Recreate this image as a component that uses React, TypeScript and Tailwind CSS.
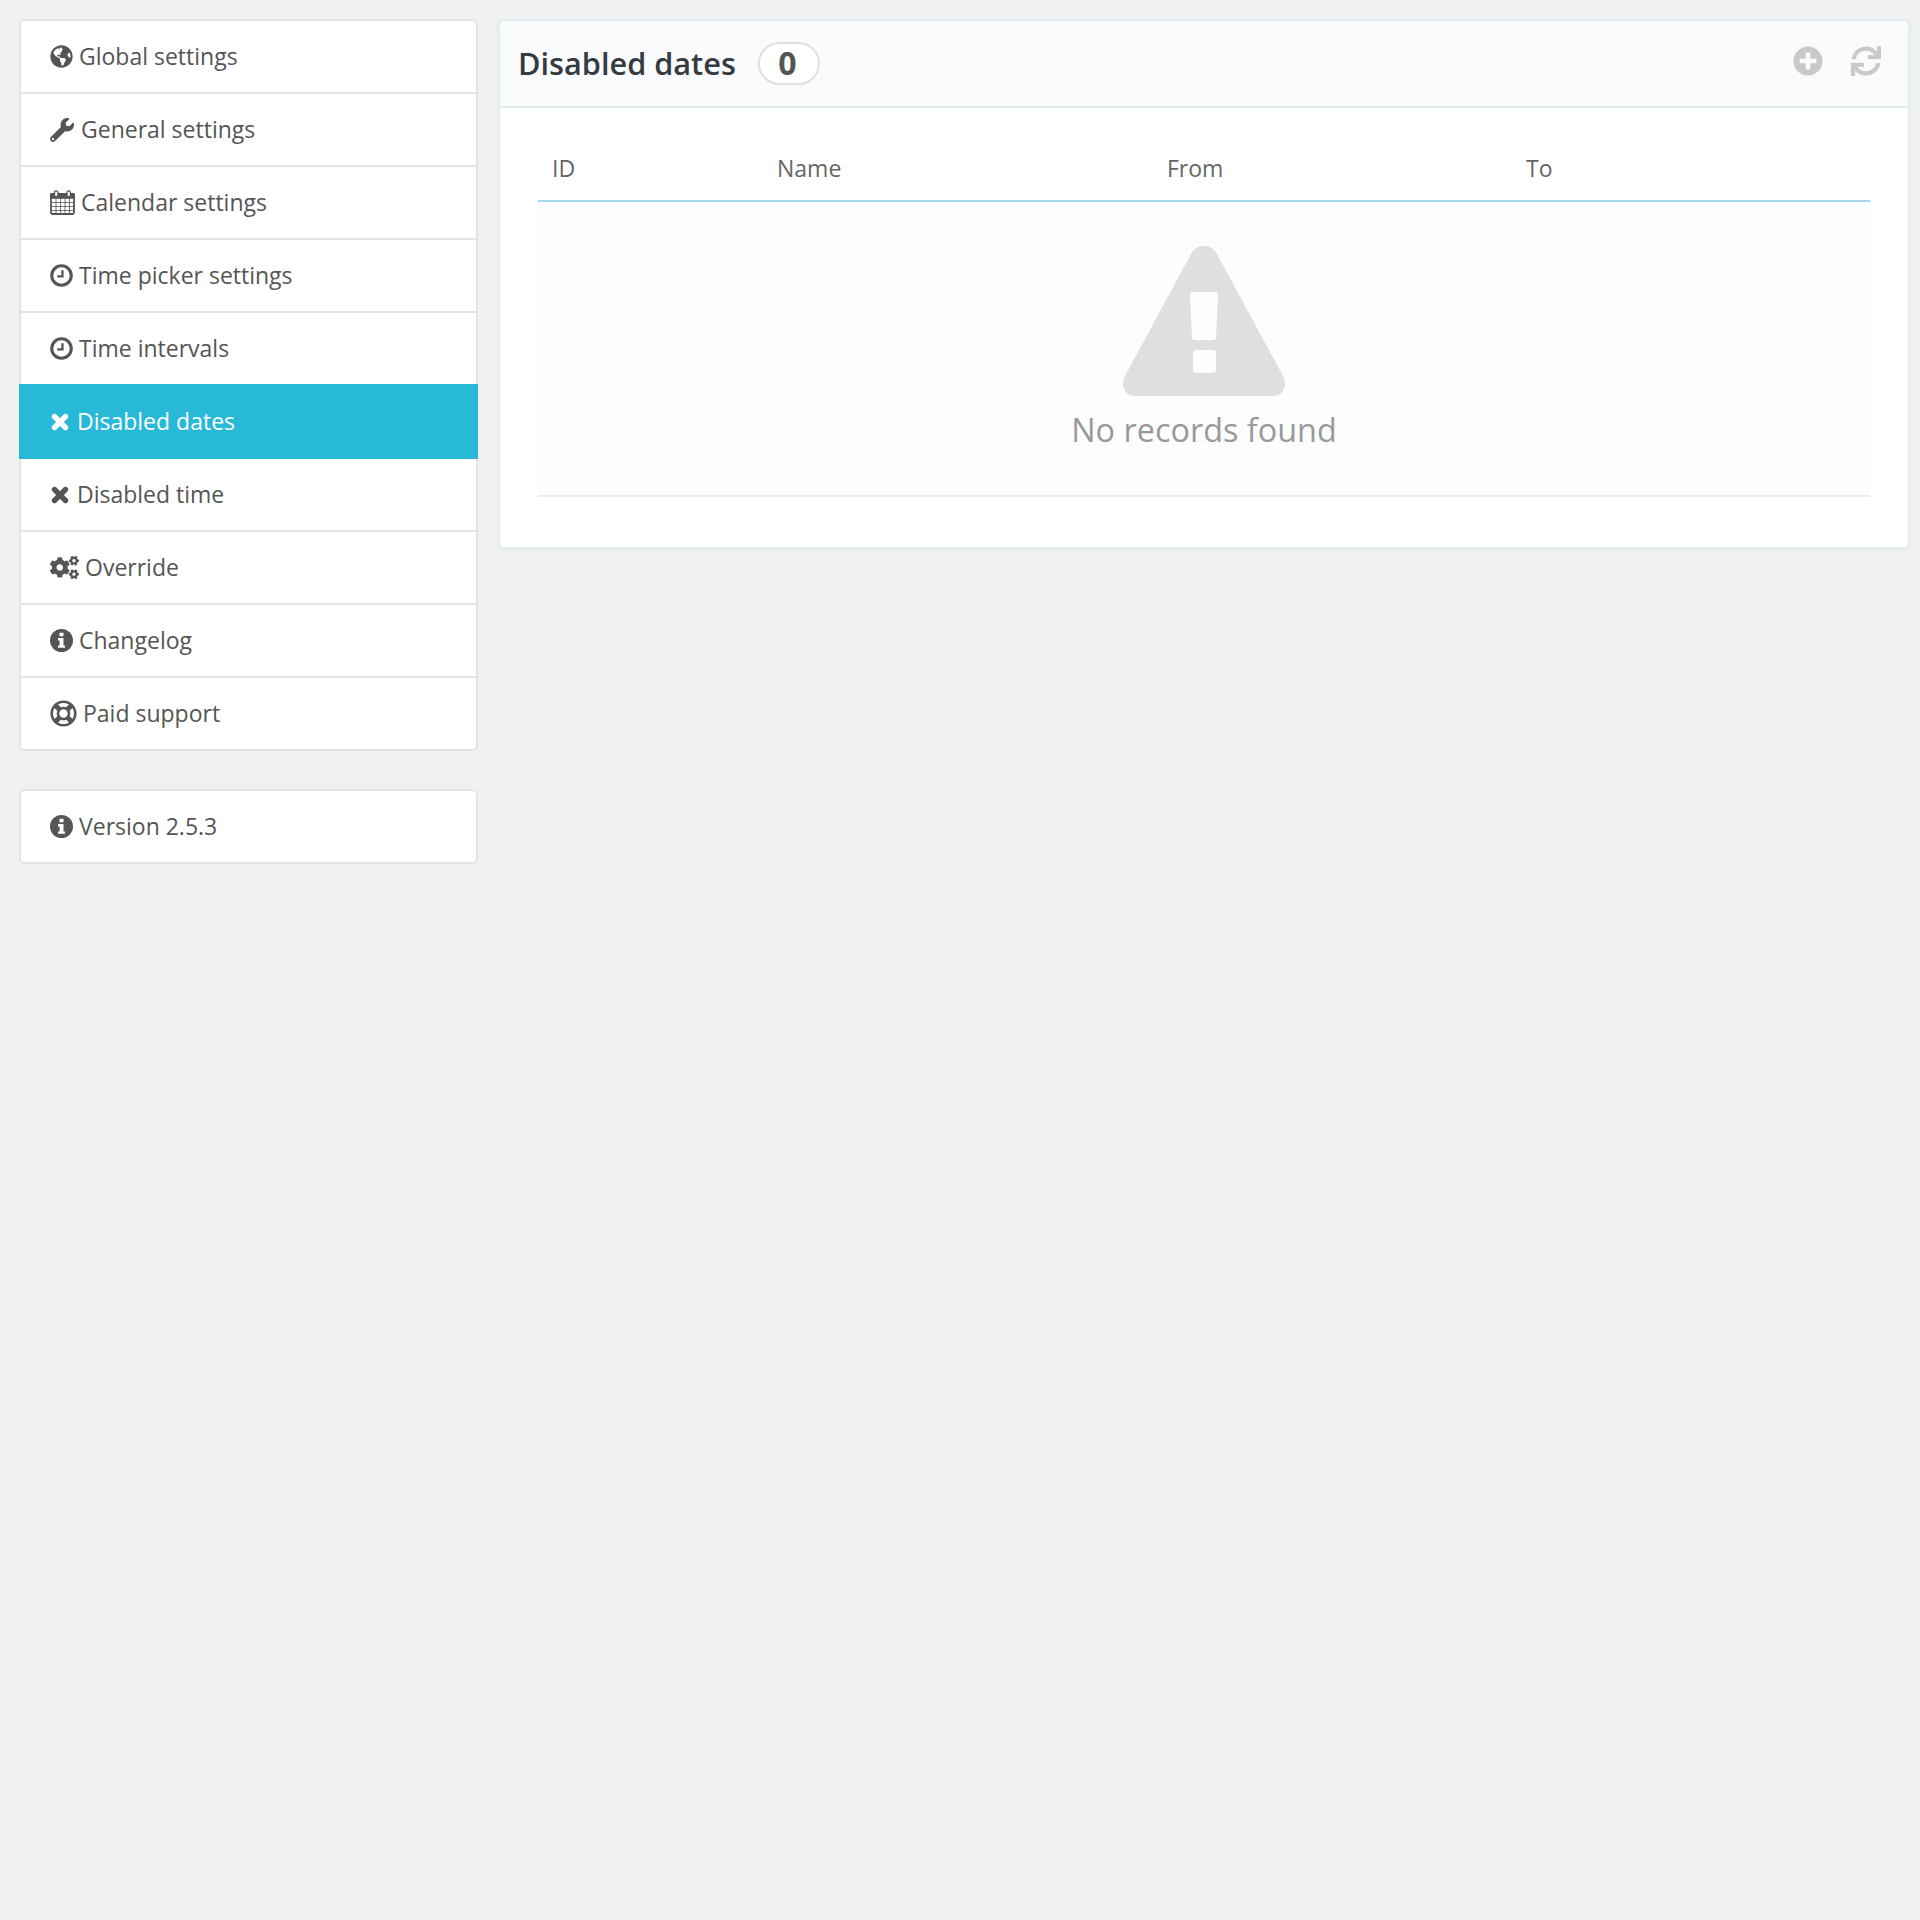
import type { ReactNode } from 'react';
import { FaCogs, FaGlobeAmericas, FaPlusCircle, FaRegLifeRing, FaSync, FaWrench } from 'react-icons/fa';

function ClockIcon() {
  return (
    <svg viewBox="0 0 24 24" className="w-[23px] h-[23px]" fill="none" stroke="currentColor">
      <circle cx="12" cy="12" r="10.2" strokeWidth="3.2" />
      <path d="M13 6.5V13H7.5" strokeWidth="2.4" />
    </svg>
  );
}

function CalendarIcon() {
  return (
    <svg viewBox="0 0 25 25" className="w-[25px] h-[25px]" fill="none" stroke="currentColor">
      <rect x="1" y="4" width="23" height="20" rx="1.5" strokeWidth="1.8" />
      <rect x="1" y="4" width="23" height="4" fill="currentColor" strokeWidth="1.6" />
      <path d="M1 12.5h23M1 16.5h23M1 20.5h23M6 8v16M10.5 8v16M15 8v16M19.5 8v16" strokeWidth="0.8" />
      <rect x="4.5" y="0.8" width="3.4" height="6" rx="1.7" fill="#fff" strokeWidth="1.3" />
      <rect x="17" y="0.8" width="3.4" height="6" rx="1.7" fill="#fff" strokeWidth="1.3" />
    </svg>
  );
}

function RemoveIcon() {
  return (
    <svg viewBox="0 0 20 20" className="w-[20px] h-[20px]" fill="none" stroke="currentColor">
      <path d="M4.5 4.5l11 11M15.5 4.5l-11 11" strokeWidth="5.4" strokeLinecap="round" />
    </svg>
  );
}

function InfoIcon() {
  return (
    <svg viewBox="0 0 23 23" className="w-[23px] h-[23px]">
      <path
        fillRule="evenodd"
        fill="currentColor"
        d="M11.5 0a11.5 11.5 0 1 1 0 23a11.5 11.5 0 0 1 0-23zM9.5 3.8v3.4h4V3.8h-4zM8 9v2.4h1.6v5H8v2.4h7v-2.4h-1.5V9H8z"
      />
    </svg>
  );
}

const menu: { label: string; icon: ReactNode; gap: string }[] = [
  { label: 'Global settings', icon: <FaGlobeAmericas size={23} />, gap: 'gap-[6px]' },
  { label: 'General settings', icon: <FaWrench size={24} />, gap: 'gap-[7px]' },
  { label: 'Calendar settings', icon: <CalendarIcon />, gap: 'gap-[6px]' },
  { label: 'Time picker settings', icon: <ClockIcon />, gap: 'gap-[6px]' },
  { label: 'Time intervals', icon: <ClockIcon />, gap: 'gap-[6px]' },
  { label: 'Disabled dates', icon: <RemoveIcon />, gap: 'gap-[7px]' },
  { label: 'Disabled time', icon: <RemoveIcon />, gap: 'gap-[7px]' },
  { label: 'Override', icon: <FaCogs size={29} />, gap: 'gap-[6px]' },
  { label: 'Changelog', icon: <InfoIcon />, gap: 'gap-[6px]' },
  { label: 'Paid support', icon: <FaRegLifeRing size={27} />, gap: 'gap-[6px]' },
];

export default function App() {
  return (
    <div className="min-h-[1920px] bg-[#eff1f2] pt-[19px] pl-[19px] pr-[10px] flex items-start gap-[20px] font-['Open_Sans',sans-serif] text-[#555555]">
      <div className="w-[459px] shrink-0">
        <div className="rounded-[6px] border-2 border-[#e2e4e6] bg-white">
          {menu.map((item, i) => {
            const active = item.label === 'Disabled dates';
            const beforeActive = menu[i + 1]?.label === 'Disabled dates';
            const last = i === menu.length - 1;
            let cls = 'h-[73px] pl-[29px] border-b-2 border-[#e2e4e6]';
            if (active) cls = 'h-[75px] -mx-[2px] pl-[31px] bg-[#29b9d8] text-white';
            else if (beforeActive || last) cls = 'h-[71px] pl-[29px]';
            return (
              <div key={item.label} className={`${cls} flex items-center ${item.gap} text-[23px]`}>
                <span className="shrink-0">{item.icon}</span>
                <span>{item.label}</span>
              </div>
            );
          })}
        </div>

        <div className="mt-[38px] h-[75px] rounded-[6px] border-2 border-[#e2e4e6] bg-white pl-[29px] flex items-center gap-[6px] text-[23px]">
          <InfoIcon />
          <span>Version 2.5.3</span>
        </div>
      </div>

      <div className="w-[1412px] h-[530px] rounded-[6px] border-2 border-[#e4edf0] bg-white shadow-[0_1px_3px_rgba(0,0,0,0.05)]">
        <div className="h-[87px] rounded-t-[6px] bg-[#fafbfc] border-b-2 border-[#e0eaed] pl-[18px] pr-[27px] flex items-center">
          <h1 className="text-[30.7px] font-semibold text-[#363a41]">Disabled dates</h1>
          <span className="ml-[22px] h-[43px] w-[62px] pr-[3px] pb-[1px] rounded-full border-2 border-[#e0e0e0] bg-white flex items-center justify-center text-[32px] font-bold text-[#555555]">0</span>
          <div className="ml-auto pb-[6px] flex items-center gap-[28px] text-[#c9c9c9]">
            <FaPlusCircle size={30} />
            <FaSync size={30} />
          </div>
        </div>

        <div className="mx-[38px] mt-[43px]">
          <div className="grid grid-cols-[225px_390px_359px_1fr] h-[51px] pl-[14px] text-[23px] text-[#666666] border-b-2 border-[#a6d8ee]">
            <span>ID</span>
            <span>Name</span>
            <span>From</span>
            <span>To</span>
          </div>
          <div className="h-[295px] bg-[#fcfdfe] border-b-2 border-[#e9edef] flex flex-col items-center pt-[44px]">
            <svg viewBox="0 0 162 150" className="w-[162px] h-[150px]">
              <path
                fillRule="evenodd"
                fill="#dfdfdf"
                d="M81 0c6 0 10 3 13 8l66 122c1 3 2 5 2 8 0 7-5 12-12 12H12c-7 0-12-5-12-12 0-3 1-5 2-8L68 8c3-5 7-8 13-8zM70 46c-2 0-3 1-3 3l2 42c0 2 1 3 3 3h18c2 0 3-1 3-3l2-42c0-2-1-3-3-3H70zm3 58c-2 0-3 1-3 3v17c0 2 1 3 3 3h17c2 0 3-1 3-3v-17c0-2-1-3-3-3H73z"
              />
            </svg>
            <div className="mt-[10px] text-[32.4px] leading-[46px] text-[#999999]">No records found</div>
          </div>
        </div>
      </div>
    </div>
  );
}
